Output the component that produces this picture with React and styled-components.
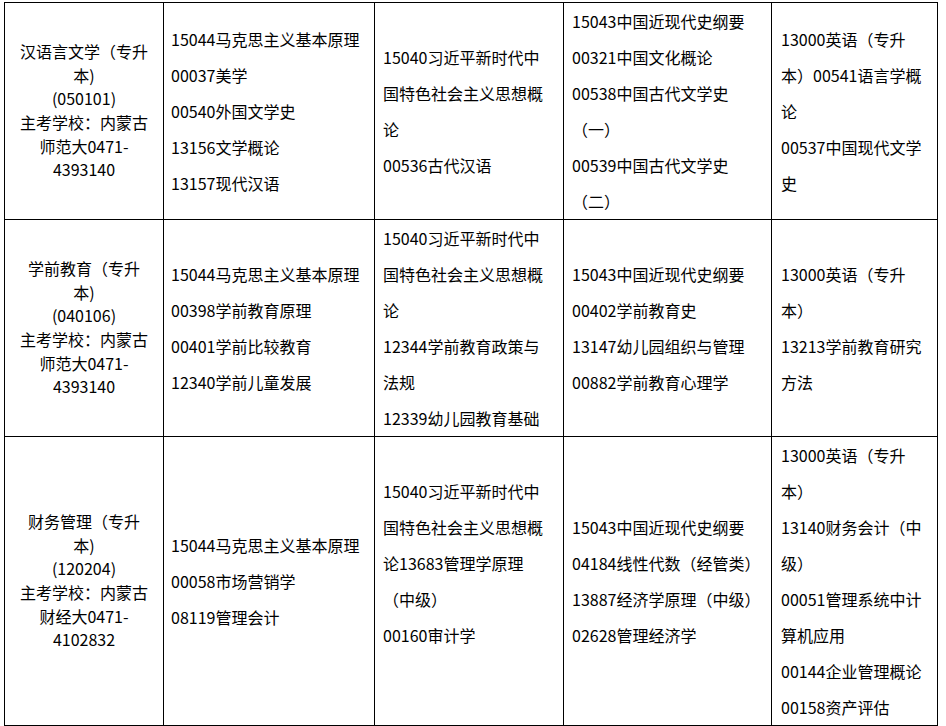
import React from "react";
import styled, { createGlobalStyle } from "styled-components";

const GlobalStyle = createGlobalStyle`
  html, body {
    margin: 0;
    padding: 0;
    background: #fff;
  }
  body {
    font-family: "Noto Sans CJK SC", "Noto Sans", sans-serif;
    color: #000;
  }
`;

const Page = styled.div`
  padding: 2px 0 0 4px;
`;

const Table = styled.table`
  border-collapse: collapse;
  table-layout: fixed;
  width: 934px;
  font-size: 16px;
`;

const Cell = styled.td`
  border: 1px solid #000;
  vertical-align: middle;
  padding: 0 ${(p) => p.$pr}px 0 ${(p) => p.$pl}px;
  line-height: 36px;
  word-break: normal;
`;

const MajorCell = styled(Cell)`
  text-align: center;
  line-height: 23.6px;
`;

const Course = styled.div`
  margin: 0;
  min-height: 36px;
`;

const columns = [
  { w: 159, pl: 14, pr: 14 },
  { w: 211, pl: 7, pr: 7 },
  { w: 189, pl: 8, pr: 15 },
  { w: 208, pl: 8, pr: 3 },
  { w: 166, pl: 9, pr: 8 },
];

const rows = [
  {
    major: ["汉语言文学（专升本)", "(050101)", "主考学校：内蒙古师范大0471-4393140"],
    cols: [
      ["15044马克思主义基本原理", "00037美学", "00540外国文学史", "13156文学概论", "13157现代汉语"],
      ["15040习近平新时代中国特色社会主义思想概论", "00536古代汉语"],
      ["15043中国近现代史纲要", "00321中国文化概论", "00538中国古代文学史（一）", "00539中国古代文学史（二）"],
      ["13000英语（专升本）00541语言学概论", "00537中国现代文学史"],
    ],
  },
  {
    major: ["学前教育（专升本)", "(040106)", "主考学校：内蒙古师范大0471-4393140"],
    cols: [
      ["15044马克思主义基本原理", "00398学前教育原理", "00401学前比较教育", "12340学前儿童发展"],
      ["15040习近平新时代中国特色社会主义思想概论", "12344学前教育政策与法规", "12339幼儿园教育基础"],
      ["15043中国近现代史纲要", "00402学前教育史", "13147幼儿园组织与管理", "00882学前教育心理学"],
      ["13000英语（专升本）", "13213学前教育研究方法"],
    ],
  },
  {
    major: ["财务管理（专升本)", "(120204)", "主考学校：内蒙古财经大0471-4102832"],
    cols: [
      ["15044马克思主义基本原理", "00058市场营销学", "08119管理会计"],
      ["15040习近平新时代中国特色社会主义思想概论13683管理学原理（中级）", "00160审计学", ""],
      ["15043中国近现代史纲要", "04184线性代数（经管类）", "13887经济学原理（中级）", "02628管理经济学"],
      [
        "13000英语（专升本）",
        "13140财务会计（中级）",
        "00051管理系统中计算机应用",
        "00144企业管理概论",
        "00158资产评估",
      ],
    ],
  },
];

function App() {
  return (
    <Page>
      <GlobalStyle />
      <Table>
        <colgroup>
          {columns.map((c, i) => (
            <col key={i} style={{ width: c.w }} />
          ))}
        </colgroup>
        <tbody>
          {rows.map((row, r) => (
            <tr key={r}>
              <MajorCell $pl={columns[0].pl} $pr={columns[0].pr}>
                {row.major.map((line, i) => (
                  <React.Fragment key={i}>
                    {i > 0 && <br />}
                    {line}
                  </React.Fragment>
                ))}
              </MajorCell>
              {row.cols.map((items, c) => (
                <Cell key={c} $pl={columns[c + 1].pl} $pr={columns[c + 1].pr}>
                  {items.map((item, i) => (
                    <Course key={i}>{item}</Course>
                  ))}
                </Cell>
              ))}
            </tr>
          ))}
        </tbody>
      </Table>
    </Page>
  );
}

export default App;
